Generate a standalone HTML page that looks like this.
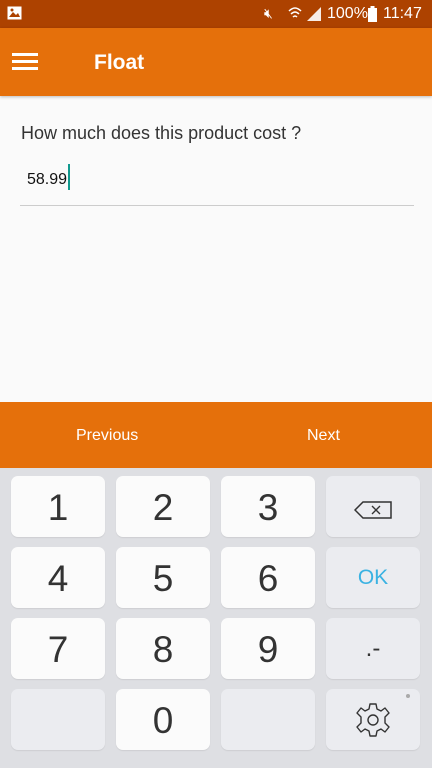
<!DOCTYPE html>
<html><head><style>
*{margin:0;padding:0;box-sizing:border-box}
body{width:432px;height:768px;overflow:hidden;background:#fafafa;font-family:"Liberation Sans",sans-serif;position:relative}
.sb{position:absolute;top:0;left:0;width:432px;height:28px;background:#ad4200;color:#fff;font-size:16px}
.tb{position:absolute;top:28px;left:0;width:432px;height:68px;background:#e5700b;box-shadow:0 1px 3px rgba(0,0,0,.25)}
.q{position:absolute;left:21px;top:123px;font-size:18px;color:#333}
.v{position:absolute;left:27px;top:171px;font-size:16px;color:#111}
.cur{position:absolute;left:68px;top:164px;width:2px;height:26px;background:#11998e}
.line{position:absolute;left:20px;top:205px;width:394px;height:1px;background:#ccc}
.bb{position:absolute;top:402px;left:0;width:432px;height:66px;background:#e5700b;color:#fff;font-size:16px}
.kb{position:absolute;top:468px;left:0;width:432px;height:300px;background:#dedfe3}
.k{position:absolute;width:94px;height:61px;border-radius:7px;background:#fbfbfb;box-shadow:0 1px 1px rgba(0,0,0,.08);text-align:center;line-height:63px;font-size:37px;color:#333;font-weight:300}
.g{background:#ebecf0}
</style></head><body>
<div class="sb">
<svg style="position:absolute;left:7px;top:6px" width="15" height="14"><rect x="0.5" y="0.5" width="14" height="13" fill="#fff"/><path d="M2 11 L6 6 L9 9 L11 7 L13 11Z" fill="#ad4200"/><circle cx="5" cy="4" r="1.5" fill="#ad4200"/></svg>
<span style="position:absolute;left:264px;top:5px;font-size:14px">🔇︎</span>
<svg style="position:absolute;left:288px;top:6px" width="14" height="16"><path d="M1 5 Q7 -1 13 5 M3 8 Q7 4 11 8 M5 11 Q7 9 9 11" stroke="#fff" stroke-width="1.5" fill="none"/></svg>
<svg style="position:absolute;left:306px;top:7px" width="16" height="14"><path d="M1 14 L15 0 L15 14Z" fill="#fff" opacity=".9"/></svg>
<span style="position:absolute;left:327px;top:5px">100%</span>
<svg style="position:absolute;left:368px;top:6px" width="9" height="16"><rect x="2.5" y="0" width="4" height="2" fill="#fff"/><rect x="0" y="2" width="9" height="14" fill="#fff"/></svg>
<span style="position:absolute;left:383px;top:5px">11:47</span>
</div>
<div class="tb">
<div style="position:absolute;left:12px;top:25px;width:26px;height:3px;background:#fff;box-shadow:0 7px 0 #fff,0 14px 0 #fff"></div>
<div style="position:absolute;left:94px;top:23px;color:#fff;font-size:21px;font-weight:bold">Float</div>
</div>
<div class="q">How much does this product cost ?</div>
<div class="v">58.99</div><div class="cur"></div>
<div class="line"></div>
<div class="bb"><span style="position:absolute;left:76px;top:25px">Previous</span><span style="position:absolute;left:307px;top:25px">Next</span></div>
<div class="kb">
<div class="k" style="left:11px;top:8px">1</div>
<div class="k" style="left:116px;top:8px">2</div>
<div class="k" style="left:221px;top:8px">3</div>
<div class="k g" style="left:326px;top:8px"><svg style="margin-top:22px" width="38" height="20"><path d="M1 10 L9 2 L37 2 L37 18 L9 18Z" fill="none" stroke="#333" stroke-width="1.5"/><path d="M18 6 L26 14 M26 6 L18 14" stroke="#333" stroke-width="1.4"/></svg></div>
<div class="k" style="left:11px;top:79px">4</div>
<div class="k" style="left:116px;top:79px">5</div>
<div class="k" style="left:221px;top:79px">6</div>
<div class="k g" style="left:326px;top:79px;font-size:21px;color:#3ab2e2;font-weight:normal;line-height:61px">OK</div>
<div class="k" style="left:11px;top:150px">7</div>
<div class="k" style="left:116px;top:150px">8</div>
<div class="k" style="left:221px;top:150px">9</div>
<div class="k g" style="left:326px;top:150px;font-size:24px;line-height:62px">.-</div>
<div class="k g" style="left:11px;top:221px"></div>
<div class="k" style="left:116px;top:221px">0</div>
<div class="k g" style="left:221px;top:221px"></div>
<div class="k g" style="left:326px;top:221px"><div style="position:absolute;right:10px;top:5px;width:4px;height:4px;border-radius:2px;background:#aaa"></div><svg style="margin-top:13px" width="36" height="36" viewBox="-18 -18 36 36"><path d="M-3-16 L3-16 L4-11 L8-9 L12-12 L16-7 L12-3 L12 3 L16 7 L12 12 L8 9 L4 11 L3 16 L-3 16 L-4 11 L-8 9 L-12 12 L-16 7 L-12 3 L-12-3 L-16-7 L-12-12 L-8-9 L-4-11Z" fill="none" stroke="#333" stroke-width="1.4" stroke-linejoin="round"/><circle r="5" fill="none" stroke="#333" stroke-width="1.4"/></svg></div>
</div>
</body></html>
